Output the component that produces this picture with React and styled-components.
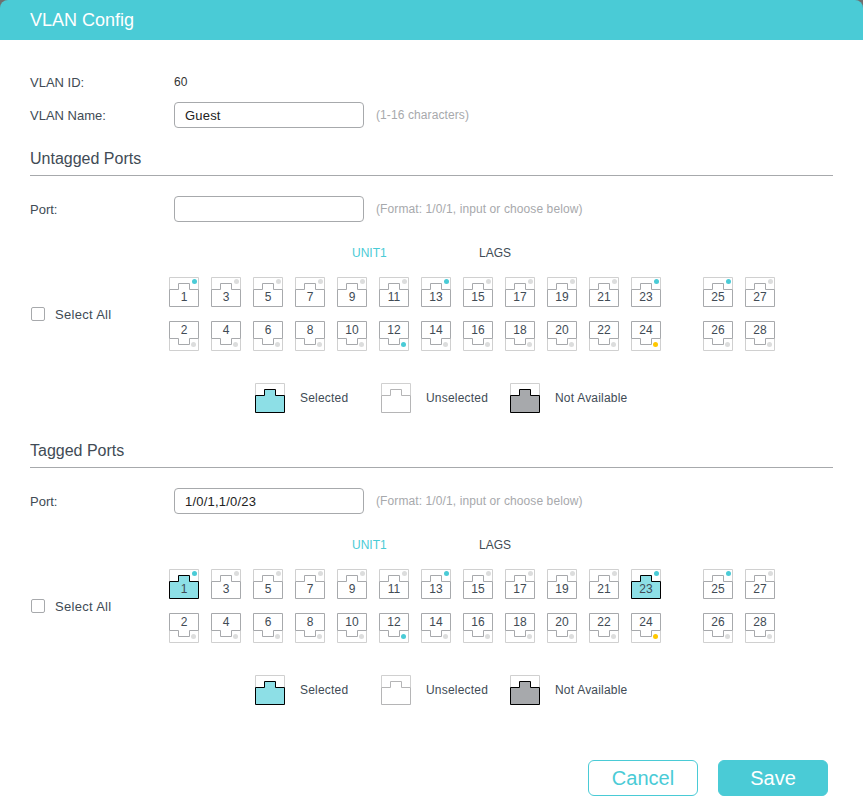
import React from "react";
import styled, { createGlobalStyle } from "styled-components";

const GlobalStyle = createGlobalStyle`
  html, body {
    margin: 0;
    padding: 0;
    background: #fff;
  }
  body {
    font-family: "Liberation Sans", Arial, sans-serif;
    font-size: 12px;
    color: #414b55;
  }
`;

const Dialog = styled.div`
  width: 863px;
  height: 811px;
  background: #fff;
  overflow: hidden;
`;

const Corner = styled.div`
  background: #6f6f6f;
`;

const Header = styled.div`
  height: 40px;
  padding-left: 30px;
  display: flex;
  align-items: center;
  background: #4acbd6;
  color: #fff;
  font-size: 18px;
  border-radius: 8px 8px 0 0;
`;

const Body = styled.div`
  padding: 32px 30px 0;
`;

const Row = styled.div`
  display: flex;
  align-items: center;
  height: ${(p) => p.$h}px;
  margin-bottom: ${(p) => p.$mb || 0}px;
`;

const Label = styled.div`
  width: 144px;
  flex: none;
  font-size: 13px;
`;

const Value = styled.div`
  color: #333;
`;

const Input = styled.input`
  box-sizing: border-box;
  width: 190px;
  height: 26px;
  padding: 0 10px;
  border: 1px solid #a7a9ac;
  border-radius: 4px;
  font: 13px "Liberation Sans", Arial, sans-serif;
  letter-spacing: 0.2px;
  color: #222;
  outline: none;
`;

const Hint = styled.div`
  margin-left: 12px;
  font-size: 12px;
  letter-spacing: 0.1px;
  color: #a7a9ac;
`;

const Section = styled.section`
  margin-bottom: ${(p) => p.$mb}px;
`;

const Title = styled.h2`
  margin: 0 0 20px;
  height: 34px;
  box-sizing: border-box;
  padding-top: 7px;
  font-size: 16px;
  font-weight: 400;
  line-height: 20px;
  color: #414b55;
  border-bottom: 1px solid #a7a9ac;
`;

const Tabs = styled.div`
  display: flex;
  height: 14px;
  margin-top: 24px;
  padding-left: 322px;
  gap: 92px;
  line-height: 14px;
`;

const Tab = styled.div`
  width: 35px;
  color: ${(p) => (p.$active ? "#4acbd6" : "#414b55")};
`;

const PortPanel = styled.div`
  display: flex;
  align-items: center;
  margin-top: 17px;
`;

const SelectAll = styled.label`
  display: flex;
  align-items: center;
  width: 139px;
  flex: none;
  gap: 10px;
  font-size: 13px;
  letter-spacing: 0.3px;
`;

const Box = styled.span`
  box-sizing: border-box;
  width: 14px;
  height: 14px;
  margin-left: 1px;
  background: #fff;
  border: 1px solid #a7a9ac;
  border-radius: 2px;
`;

const Columns = styled.div`
  display: flex;
  gap: 42px;
`;

const PortGrid = styled.div`
  display: grid;
  grid-template-columns: repeat(${(p) => p.$cols}, 30px);
  grid-template-rows: 30px 30px;
  grid-auto-flow: column;
  column-gap: 12px;
  row-gap: 14px;
`;

const PortCell = styled.div`
  position: relative;
  width: 30px;
  height: 30px;
`;

const PortNumber = styled.span`
  position: absolute;
  left: 0;
  right: 0;
  top: ${(p) => (p.$bottom ? 2 : 13)}px;
  text-align: center;
  line-height: 14px;
  color: #414b55;
`;

const Legend = styled.div`
  display: flex;
  height: 30px;
  margin-top: 32px;
  padding-left: 225px;
`;

const LegendItem = styled.div`
  display: flex;
  align-items: center;
  width: ${(p) => p.$w}px;
  gap: 15px;
  flex: none;
  letter-spacing: 0.2px;
`;

const Footer = styled.div`
  display: flex;
  justify-content: flex-end;
  gap: 20px;
  padding-right: 5px;
`;

const Button = styled.button`
  box-sizing: border-box;
  width: 110px;
  height: 36px;
  border: 1px solid #4acbd6;
  border-radius: 6px;
  background: ${(p) => (p.$primary ? "#4acbd6" : "#fff")};
  color: ${(p) => (p.$primary ? "#fff" : "#4acbd6")};
  font: 20px "Liberation Sans", Arial, sans-serif;
  padding: 0;
`;

const DOT_COLORS = {
  up: "#4acbd6",
  warn: "#ffc800",
  off: "#dcdddd",
};

const FILLS = {
  normal: { fill: "#fff", stroke: "#a7a9ac" },
  selected: { fill: "#8ddfe6", stroke: "#000" },
  disabled: { fill: "#a7a9ac", stroke: "#000" },
  plain: { fill: "#fff", stroke: "#b5b5b6" },
};

// socket outline, tab side up; lower row flips it
function PortIcon({ bottom, state = "normal", dot }) {
  const { fill, stroke } = FILLS[state];
  return (
    <svg width="30" height="30" viewBox="0 0 30 30" style={{ display: "block" }}>
      <g transform={bottom ? "matrix(1 0 0 -1 0 30)" : undefined}>
        <path d="M0.5 12.5V0.5H29.5V12.5" fill="#fff" stroke="#d0d0d0" />
        <path
          d="M0.5 12.5H9.5V6.5H20.5V12.5H29.5V29.5H0.5Z"
          fill={fill}
          stroke={stroke}
        />
      </g>
      {dot && (
        <circle
          cx={bottom ? 24.5 : 25.5}
          cy={bottom ? 23.5 : 4.5}
          r="2.5"
          fill={DOT_COLORS[dot]}
        />
      )}
    </svg>
  );
}

function Port({ number, selected }) {
  const bottom = number % 2 === 0;
  let dot = "off";
  if ([1, 12, 13, 23, 25].includes(number)) dot = "up";
  if (number === 24) dot = "warn";
  return (
    <PortCell>
      <PortIcon bottom={bottom} dot={dot} state={selected ? "selected" : "normal"} />
      <PortNumber $bottom={bottom}>{number}</PortNumber>
    </PortCell>
  );
}

const unitPorts = Array.from({ length: 24 }, (_, i) => i + 1);
const lagPorts = [25, 26, 27, 28];

function PortSection({ title, value, selected = [], mb }) {
  return (
    <Section $mb={mb}>
      <Title>{title}</Title>
      <Row $h={26}>
        <Label>Port:</Label>
        <Input defaultValue={value} />
        <Hint>(Format: 1/0/1, input or choose below)</Hint>
      </Row>
      <Tabs>
        <Tab $active>UNIT1</Tab>
        <Tab>LAGS</Tab>
      </Tabs>
      <PortPanel>
        <SelectAll>
          <Box />
          Select All
        </SelectAll>
        <Columns>
          <PortGrid $cols={12}>
            {unitPorts.map((n) => (
              <Port key={n} number={n} selected={selected.includes(n)} />
            ))}
          </PortGrid>
          <PortGrid $cols={2}>
            {lagPorts.map((n) => (
              <Port key={n} number={n} />
            ))}
          </PortGrid>
        </Columns>
      </PortPanel>
      <Legend>
        <LegendItem $w={126}>
          <PortIcon state="selected" />
          Selected
        </LegendItem>
        <LegendItem $w={129}>
          <PortIcon state="plain" />
          Unselected
        </LegendItem>
        <LegendItem $w={130}>
          <PortIcon state="disabled" />
          Not Available
        </LegendItem>
      </Legend>
    </Section>
  );
}

export default function App() {
  return (
    <>
      <GlobalStyle />
      <Dialog>
        <Corner>
          <Header>VLAN Config</Header>
        </Corner>
        <Body>
          <Row $h={20} $mb={10}>
            <Label>VLAN ID:</Label>
            <Value>60</Value>
          </Row>
          <Row $h={26} $mb={14}>
            <Label>VLAN Name:</Label>
            <Input defaultValue="Guest" />
            <Hint>(1-16 characters)</Hint>
          </Row>
          <PortSection title="Untagged Ports" mb={21} />
          <PortSection title="Tagged Ports" value="1/0/1,1/0/23" selected={[1, 23]} mb={55} />
          <Footer>
            <Button>Cancel</Button>
            <Button $primary>Save</Button>
          </Footer>
        </Body>
      </Dialog>
    </>
  );
}
